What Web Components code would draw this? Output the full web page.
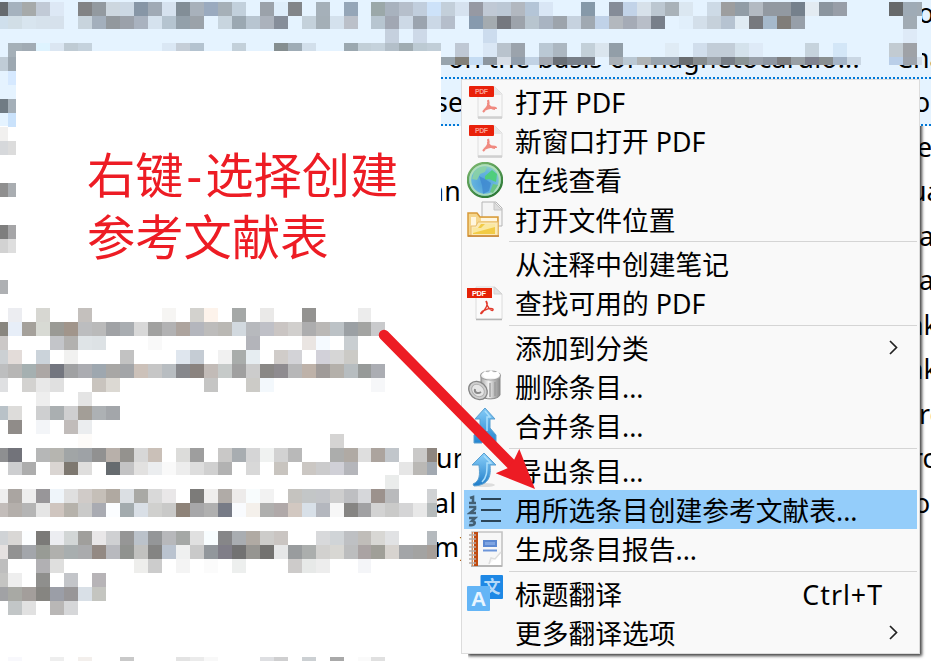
<!DOCTYPE html>
<html lang="zh-CN">
<head>
<meta charset="utf-8">
<title>Zotero</title>
<style>
  body {
    margin: 0;
    width: 931px;
    height: 663px;
    overflow: hidden;
    background: #fff;
    color: #000;
    font-family: "Noto Sans", "Noto Sans CJK SC", sans-serif;
    font-size: 26.75px;
  }
</style>
</head>
<body>
<app-window>
  <item-list slot="list">
    <item-row selected style="--author: 28px"><span slot="author">o</span></item-row>
    <item-row selected style="--title: 7px; --author: 6px">on the basis of magnetocardio...<span slot="author">Cha</span></item-row>
    <item-row selected focused style="--title: -6px; --author: 24px">se<span slot="author">oc</span></item-row>
    <item-row style="--author: 27px"><span slot="author">e</span></item-row>
    <item-row style="--title: -12px; --author: 20px">an<span slot="author">ua</span></item-row>
    <item-row style="--author: 29px"><span slot="author">a</span></item-row>
    <item-row style="--author: 29px"><span slot="author">a</span></item-row>
    <item-row style="--author: 17px"><span slot="author">nk</span></item-row>
    <item-row style="--author: 17px"><span slot="author">nk</span></item-row>
    <item-row style="--author: 29px"><span slot="author">re</span></item-row>
    <item-row style="--title: -5px; --author: 22px">ur<span slot="author">rc</span></item-row>
    <item-row style="--title: -7px; --author: 24px">al<span slot="author">o</span></item-row>
    <item-row style="--title: -7px">m)</item-row>
  </item-list>
  <pixel-mosaic slot="over" area="list"></pixel-mosaic>
  <note-card slot="over">右键<span style="margin: 0 3px">-</span>选择创建<br>参考文献表</note-card>
  <pixel-mosaic slot="over" area="note"></pixel-mosaic>
  <context-menu slot="over">
    <menu-item icon="pdf-soft">打开 PDF</menu-item>
    <menu-item icon="pdf-soft">新窗口打开 PDF</menu-item>
    <menu-item icon="globe">在线查看</menu-item>
    <menu-item icon="folder">打开文件位置</menu-item>
    <menu-line></menu-line>
    <menu-item>从注释中创建笔记</menu-item>
    <menu-item icon="pdf">查找可用的 PDF</menu-item>
    <menu-line></menu-line>
    <menu-item submenu>添加到分类</menu-item>
    <menu-item icon="trash">删除条目...</menu-item>
    <menu-item icon="merge">合并条目...</menu-item>
    <menu-line></menu-line>
    <menu-item icon="export">导出条目...</menu-item>
    <menu-item icon="list" active>用所选条目创建参考文献表...</menu-item>
    <menu-item icon="report">生成条目报告...</menu-item>
    <menu-line></menu-line>
    <menu-item icon="translate">标题翻译<span slot="key">Ctrl+T</span></menu-item>
    <menu-item submenu>更多翻译选项</menu-item>
  </context-menu>
  <red-arrow slot="over"></red-arrow>
</app-window>

<script>
const ICONS = {
  'pdf': `
    <path d="M9 2h19l7 7v25H9z" fill="#fbfbfb" stroke="#dcdcdc"/>
    <path d="M9 34.5h26" stroke="#b5b5b5" stroke-width="1.5"/>
    <path d="M27 2v7h8z" fill="#e2e2e2" stroke="#d2d2d2"/>
    <rect x="0" y="3" width="25" height="10" fill="#e52207"/>
    <text x="5" y="11" font-family="Liberation Sans" font-weight="bold" font-size="7.5" fill="#fff" textLength="14">PDF</text>
    <path d="M19 16c3 3 0 7-4 12-2 2-2-1 3-3 4-2 9-2 8 0s-6-2-7-9" fill="none" stroke="#e23a2c" stroke-width="1.4"/>`,
  'pdf-soft': `
    <path d="M11 3h17l7 7v24H11z" fill="#f8f8f8" stroke="#dedede"/>
    <path d="M11 33.5h24" stroke="#d0d0d0" stroke-width="2.5"/>
    <path d="M27 2v9h8z" fill="#e6e6e6"/>
    <rect x="2" y="2" width="25" height="11" rx="1" fill="#e9210a"/>
    <text x="8" y="10" font-family="Liberation Sans" font-weight="bold" font-size="7" fill="#f9a094" textLength="13">PDF</text>
    <path d="M21 16c2 5-1 8-5 12M17 26c5-3 12-3 12-1M21 19c0 3 4 6 7 6" fill="none" stroke="#f08a80" stroke-width="2.2"/>`,
  'globe': `
    <defs>
      <radialGradient id="sea" cx=".45" cy=".6" r=".6"><stop offset="0" stop-color="#4d9ed9"/><stop offset=".6" stop-color="#68b6df"/><stop offset="1" stop-color="#9cd6ba"/></radialGradient>
      <linearGradient id="rim" x2=".6" y2="1"><stop offset="0" stop-color="#7fba70"/><stop offset="1" stop-color="#2f7b37"/></linearGradient>
    </defs>
    <circle cx="18" cy="18" r="17" fill="url(#sea)" stroke="url(#rim)" stroke-width="2.4"/>
    <circle cx="18" cy="18" r="14.8" fill="none" stroke="#b9e3b4" stroke-width="2" opacity=".8"/>
    <path d="M7 10c4-5 9-6 13-5l-2 5-5 2-3 6-5-1z" fill="#8fd69c" opacity=".8"/>
    <path d="M18 14l7-6 5 4-1 8-7-3-4 1z" fill="#4fce7c"/>
    <path d="M12 14l6 3 6 4-2 8-6 3-1-9z" fill="#3d87cf" opacity=".75"/>
    <path d="M26 22l5 1-5 8-3-1z" fill="#6bc583"/>`,
  'folder': `
    <path d="M15 1h14l6 6v18H15z" fill="#f5f5f5" stroke="#b5b5b5"/>
    <path d="M27 1v8h8z" fill="#ddd" stroke="#c4c4c4"/>
    <path d="M1 12h9l3 4h18v19H1z" fill="#f5d68c" stroke="#d89a3a" stroke-width="1.5"/>
    <path d="M4 26V16h5v9zM14 17h16v3H14z" fill="#fff6df"/>
    <path d="M4 25h5l2-4h20v14H4z" fill="#fbe9b5" stroke="#e8bd6c"/>
    <path d="M6 27h5l3-4h14v10H6z" fill="#f2cb45"/>
    <path d="M6 27h8l4-4h10v3L6 32z" fill="#fae8a0"/>
    <path d="M1 35h31" stroke="#c9883b" stroke-width="1.6"/>`,
  'trash': `
    <defs><linearGradient id="can"><stop offset="0" stop-color="#aaa"/><stop offset=".4" stop-color="#f2f2f2"/><stop offset=".7" stop-color="#b8b8b8"/><stop offset="1" stop-color="#8a8a8a"/></linearGradient></defs>
    <path d="M14 6v21c3 4 17 4 19-1V6z" fill="url(#can)" stroke="#8a8a8a"/>
    <path d="M23 14v14M28 13v14" stroke="#999" stroke-width="1.3"/>
    <ellipse cx="23.5" cy="6.5" rx="10" ry="4.5" fill="#f2f2f2" stroke="#a0a0a0" stroke-width="1.2"/>
    <path d="M15 5l3-3 3 2 3-3 3 3 4-2 2 4-4 3H18z" fill="#fff"/>
    <ellipse cx="11" cy="21.5" rx="8.3" ry="10" transform="rotate(-48 11 21.5)" fill="#cfcfcf" stroke="#858585" stroke-width="1.3"/>
    <ellipse cx="11" cy="21.5" rx="5.5" ry="7" transform="rotate(-48 11 21.5)" fill="#e6e6e6" stroke="#b0b0b0"/>
    <path d="M8 20c-1 4 3 5 6 3" fill="none" stroke="#8a8a8a" stroke-width="2"/>`,
  'merge': `
    <defs><linearGradient id="up" x2="0" y2="1"><stop offset="0" stop-color="#85ccf8"/><stop offset="1" stop-color="#2384cf"/></linearGradient></defs>
    <path d="M18 0l10 11h-5v9l6 7v8h-8l-3-9-3 9H7v-8l6-7v-9H8z" fill="url(#up)" stroke="#5a9fd0"/>
    <path d="M18 3l5 6h-3v14" fill="none" stroke="#a9defb" stroke-width="1.5"/>`,
  'export': `
    <defs><linearGradient id="out" x2="0" y2="1"><stop offset="0" stop-color="#8bd0fa"/><stop offset="1" stop-color="#1f7dc9"/></linearGradient></defs>
    <ellipse cx="17" cy="33" rx="11" ry="2" fill="#ddd"/>
    <path d="M17 1L29 13h-6c1 10 0 20-16 21l-1-2c7-3 7-9 6-19H5z" fill="url(#out)" stroke="#5a9fd0"/>
    <path d="M17 4l7 7h-4c0 9 0 14-5 19" fill="none" stroke="#a9defb" stroke-width="1.5"/>`,
  'list': `
    <g stroke="#2b4456" stroke-width="2.2"><path d="M14 7h20M14 18h20M14 29h20"/></g>
    <g fill="none" stroke="#435f73" stroke-width="2.6"><path d="M3 6l3-1v6M2 11h7M2 15h6v2l-5 4h6M2 26h6l-3 3c4 0 4 5-3 4"/></g>`,
  'report': `
    <path d="M5 1h30v34H5z" fill="#f7f7f7" stroke="#c4c4c4" stroke-width="1.6"/>
    <path d="M4 35h31" stroke="#b5b5b5" stroke-width="2"/>
    <path d="M7 1h4v34H7z" fill="#c04a10"/>
    <path d="M5.5 1v34" stroke="#db8a52"/>
    <path d="M2 4h7M2 8h7M2 12h7M2 16h7M2 20h7M2 24h7M2 28h7M2 32h7" stroke="#b5aaa5" stroke-width="1.5"/>
    <path d="M16 9h14v7H16z" fill="#5c89d2"/><path d="M18 11h10v3H18z" fill="#7fa5e2"/>
    <path d="M16 19.5h14" stroke="#6d96da" stroke-width="2"/>
    <path d="M22 34l12-13v13z" fill="#fff"/><path d="M22 33l2-6 4 1 6-7" fill="none" stroke="#dedede" stroke-width="1.5"/>`,
  'translate': `
    <rect x="13.5" y="0" width="22.5" height="24" rx="1" fill="#1e88e5"/>
    <text x="16.500" y="18" font-family="Noto Sans CJK SC" font-weight="bold" font-size="17" fill="#b5d9f8">文</text>
    <rect x="0" y="11" width="23" height="25" rx="1" fill="#64b5f6"/>
    <text x="4" y="31" font-family="Liberation Sans" font-weight="bold" font-size="21" fill="#e9f5ff">A</text>`
};

// One line per mosaic row: height | colours from the left edge, ".n" skips n cells
const MOSAICS = {
  list: `
2|
14|666a6e a5b2be a6aaaa c1cad6 dde8f5 .1 828385 939aa0 cdd7df ccd8e4 8796a6 a0aab5 d6e2ef 828e97 a8b1bb 9aaabf a6b0b8 c2d0dc .1 9ba2aa deedfa 828589 .1 a5b0b9 .1 95a6b8 .1 9ba8a9 a8b2be b6bfcb c1cedd cde2f9 c3cfda d6e2ef 9699a3 c0c9d5 bcc8d5 b2b8c0 b4c5d7 d9e6f5 .2 8699a9 .1 858c98 c2d3e8 d7e1ea bcc7d1 a9b2b9 dbe7f1 .1 cddae6 9d9e9f 929da6 b3bac2 9299a1 9299a1 75808c e3ebf2 8b959f 989ea8 .3 67696b 9fabb6 a1abb4
13|cfdfec d1dee6 d8e5ef d6e2ec d6e1ec .1 c8d4dd a3afbc 92989d 9ba1aa a9b2bf d5e2ee b5c4d0 93a0aa 9ba2a9 .1 c8d5df 9ba8b2 b8c5d1 abb2bc 868e9a .1 c4d1db a4afb7 d4e1ed bbc0c9 .1 b7c5d0 a1a7b3 cdd9e6 9ba4af cbd8e6 b5becb .1 879aae a4abb0 75787f 9da3ab b8c5cf a9b4c2 9da4ac c6d2df a0a9b2 c0d2e8 b3b8be a5abb6 b8bec8 787f8a .1 e1effb d3dfea c6d1db b6c3d1 e0ebf3 77797e a6b9cb 807d79 979fa9 .7 a1abb4
14|.28 c5d0de .1 cdd9e8 .4 ccdcee .29 deeaf7
14|.1 a5b0b8 a1abb4 def3ff dbe6f2 bfcbd4 c5d2dd .5 dae7f4 c5ced8 b4c3d0 .2 c3d0da .2 858e90 9facb6 d2dfeb .2 9ba8b0 c2cfd8 c5d2dc b3bfc9 a0acb2 bccad3 c1ced8 .1 bfc8d4 .1 dae7f5 b9c3cd 9ba3ac .1 bac8d4 acb7c1 .1 c3d0d9 dae5ee 929ea8 .3 dfebf5 .1 d1deec c2cdd8 c2cdd8 d4e2ec deeaf7 .3 c6d3dd .1 d3e6f7 .3 c2cbd2 9fa2a7
8|c0ccd6 9da8b1 .30 98a4ad 828079 c5dcf3 8d969f d7dee7 919eac c1d2e4 a2a7b0 6a6f76 787f89 787f89 e5f3ff a9b0b7 bac8d4 afb3b5 99a4ae 9aa5b1 696d71 868b8e 9ba3ab 767d86 8a9496 98a0aa 8f97a2 7c7d80 99a0a5 80838f 898f91 a4b4c7 cad7e4 .2 b9cee8 9da3ac d3deea
6|c0ccd6 9da8b1
14|.1 d6e9ff
14|
14|707b84 a4afb8
14|.1 cae2fb
14|f1f0ef
14|d6d8db dcdcdc
14|
14|
14|8f8f8f a9adb1
14|
14|
14|7e7e7e a5a5a7
14|d2d2d2 dedede
14|
13|
14|aeb0b3`,
  note: `
308|
14|.1 ecedf1 .1 d7d7d2 .2 c4c0bd .5 f6f5f3 .1 d3d2ce fdf3eb .1 a5a8a7 .1 eae9e8 .2 949391 .3 ececec
14|89867f e7eef8 a5a19b d8dad4 9a9a95 a1958b bcbdbf bababa a0a2a5 a9adb1 d8d8d8 a1a1a0 b2b2b3 ada49e b4b6bd bdbcbb bab8b4 d2d9df b7b9bd bfc0c7 cac5c3 d1cfcd adadae bab8b6 bcc2c6 9ba0a4 a3a4a2 c9cacc
14|cbc8c7 .3 c3c5c9 b2b1af dfe4e7 dde2e5 .3 f9f9f9 .6 b3b4ba .3 eae5e2 f5faff .1 c9ced1
14|ccd0d3 e3dcd9 .1 cbd3da .1 f1f1f0 .3 c2c2c2 .3 dfe6ee c5ccd4 .1 f1f1f1 a9adab e6edf1 .1 d0ccc9 d3d3d7 .1 d2d1d9 d6d6d6 cbcac6
14|bdbebf b7b6b5 a5b0b1 aca7a5 73767f a0a1a3 abacb1 9ea7af a8a7a5 a3a5a8 ccc1b9 c6c6c6 b8bdc1 87888c 8a837f c2bbb7 c6cac9 a0a0a0 cccccc 8a8886 8f8c90 b7b7b8 beb2a9 a09b99 b4b0aa b7bdc0 979a99 abadb3
14|dfe0e2 .1 d3d2d0 e8e8e8 e0e0e0 .2 c9c4be dcd9d3 .6 c5c5c4 .2 cccbc7 f3f8fc .7 f6f7f9
14|.3 eeeeee .2 e4e4e4
14|b9c2c8 dddcda .1 cecfd0 aaafb1 cfcfd0 a39e97 adb1b4 a3a6aa
14|.1 908c89 .1 f3f5f8 .1 c1bcba ebedef
14|.6 fdfbf9 .17 d5d4d3
14|8e8f91 72737a .1 b6b7b7 b6b5b0 a1a5a6 9ea2a6 919191 b8b0aa 94928e d7d7d7 cac0b8 .1 dcdcda 9e9e9e .1 c9c8c7 a8adb1 d5d5d6 f0f2f1 d2d2d2 b9b9b9 .2 acadac b0aaa4 dedede aca49e c1c6cb .1 cac9c8 8e8680
13|.1 cdced0 adadad .1 dad5d2 7e7870 dfdedd .1 666b6f c3c3c4 e2e1e0 ebedef f9f9f9 ededed dddddd d0d0d0 b2b2b2 .1 d8d8d8 .1 c8c4bf .1 cbc7c3 cbcbcc d0d0d7 b5b6bb .3 e6e6e6 bab8b5 a2a9b1
14|.28 eaeceb
14|efefef aaa5a1 eeeeee 989699 eff5fa dfdfdf d0cbc8 c5bfb8 b0a9a1 dbdfe3 a9a9a5 d9d9d9 e9e7e8 .1 7c7b79 efeeed b0aba7 edebea f8fcfd f2f2f2 .1 c5c3bf c3c6c7 c3c5c9 cecece bebfc2 d6d7da 9c928d b9babc .2 d0d2d4
14|c3bdba b4afab b5b5b5 e5e5e5 cfc5bf b6b2ab cacac9 a9abb2 fbfdff a3abae d9dfe6 d0d0ce c9c9c8 8e8379 a7a7a9 b0b0b0 777b86 f9fbfe f4f0eb afafae b0a9a9 d2c8c1 d8e0e8 b4b7be f7f7f7 868583 a1a1a3 d3d3d3 cacac9 d5d5d6 e8e8e8 b6bbbc
14|
14|d0d3d6 d9d7d5 fcfeff 7b7a78 ecedf1 d2d6d6 a09f9c e9e7e8 cfd0d2 969696 bbc2ca 949698 b7b8bb a5a8a6 e0e0e0 f8fdff 868688 a9adb1 b0aaa3 cdccca cac5c2 .2 d8d9db d0d4d7 bec0c3 c0bdb9 d8d7d4 e1e2e4 .2 b5babe
14|e5e1e0 929292 a3a6ab 989b95 b0b0ad a8aeaf aaabad 938983 b8b9be 90928f c1c1bf 848483 bac3cf eff0f0 c9c9c9 92979c 807e88 727272 969591 737270 e6e7e8 999c9e abaead d2d1cf d8d7d3 bcbdbe aaa3a3 a09f98 d7d3cf a3a5a8 a3a3a2 a79f99
14|bebebe .2 b1b0b3 dfdfde .5 eeeeec cccccc .1 f4f4f4 .1 fbfbfb .1 edefee .3 cdcbca e7e9e8 ededed .2 f4f5f8
14|c4c4c2 eeeeee .1 8f8f8d .1 c3c5c9 .1 b7b4b7
14|a1a2a5 a8a9a4 a39e9b 868581 9b9ea7 989698 d9e0e7 c4c5c0
14|.1 c2c6c7 e1e1e1 .1 b9b7b6 d6d7d9
42|
4|.1 f8f8fc .2 eeeeee .1 f3efec .2 c9c9c9 .3 e3e3e3 ebebeb f8f8f8 .3 dedfe2 cfcfd0 .1 ccd0d3 .1 a9a9a9 .1 fafafa e0e0e0`
};

class AppWindow extends HTMLElement {
  constructor() {
    super();
    this.attachShadow({mode: 'open'}).innerHTML = `
      <style>
        :host { display: block; position: relative; width: 931px; height: 663px; overflow: hidden; }
      </style>
      <slot name="list"></slot>
      <slot name="over"></slot>
    `;
  }
}

class ItemList extends HTMLElement {
  constructor() {
    super();
    this.attachShadow({mode: 'open'}).innerHTML = `
      <style>
        :host { display: flex; flex-direction: column; margin-top: -8px; }
      </style>
      <slot></slot>
    `;
  }
}

class ItemRow extends HTMLElement {
  constructor() {
    super();
    this.attachShadow({mode: 'open'}).innerHTML = `
      <style>
        :host {
          display: flex;
          position: relative;
          box-sizing: border-box;
          height: 44.5px;
          padding-left: 441px;
          line-height: 42px;
          white-space: nowrap;
        }
        :host([selected]) { background: #e5f3ff; }
        :host([focused])::before {
          content: "";
          position: absolute;
          inset: -4px 0 0 441px;
          --dots: repeating-linear-gradient(90deg, #0078d7 0 2px, transparent 2px 4px);
          background: var(--dots) top / 100% 2px no-repeat, var(--dots) bottom / 100% 2px no-repeat;
        }
        .title { flex: 0 0 449px; text-indent: var(--title, 0); letter-spacing: .23px; }
        .author { text-indent: var(--author, 0); }
      </style>
      <div class="title"><slot></slot></div>
      <div class="author"><slot name="author"></slot></div>
    `;
  }
}

class PixelMosaic extends HTMLElement {
  connectedCallback() {
    const rows = MOSAICS[this.getAttribute('area')].trim().split('\n').map(line => {
      const [height, cells] = line.split('|');
      const html = cells.split(' ').filter(Boolean).map(c =>
        c[0] === '.' ? '<i></i>'.repeat(+c.slice(1)) : `<i style="background:#${c}"></i>`).join('');
      return `<div style="height:${height}px">${html}</div>`;
    }).join('');
    this.attachShadow({mode: 'open'}).innerHTML = `
      <style>
        :host { display: block; position: absolute; inset: 0; }
        div { display: flex; }
        i { flex: 0 0 14px; }
        i:first-child { flex-basis: 8px; }
        i:nth-child(27) { flex-basis: 13px; }
        i:nth-child(67) { flex-basis: 5px; }
        /* the bands over the selected rows hide the text below them */
        :host([area="list"]) div:nth-of-type(-n+6) { width: 922px; background: #e5f3ff; }
        :host([area="list"]) div:nth-of-type(7) { width: 16px; }
        :host([area="note"]) i:nth-child(32) { flex-basis: 10px; }
      </style>
      ${rows}
    `;
  }
}

class NoteCard extends HTMLElement {
  constructor() {
    super();
    this.attachShadow({mode: 'open'}).innerHTML = `
      <style>
        :host {
          display: block;
          position: absolute;
          left: 16px;
          top: 51px;
          width: 425px;
          height: 257px;
          box-sizing: border-box;
          padding: 92px 0 0 71px;
          background: #fff;
          color: #ed1c24;
          font-size: 48.3px;
          line-height: 62px;
          white-space: nowrap;
        }
      </style>
      <slot></slot>
    `;
  }
}

class ContextMenu extends HTMLElement {
  constructor() {
    super();
    this.attachShadow({mode: 'open'}).innerHTML = `
      <style>
        :host {
          display: flex;
          flex-direction: column;
          position: absolute;
          left: 461px;
          top: 79px;
          width: 459px;
          height: 575px;
          box-sizing: border-box;
          padding: 2px 2px 0 2px;
          border: 1px solid #dcdcdc;
          background: #f9f9f9;
        }
        /* shadow falls to the right and below, starting a little past the corner */
        :host::after {
          content: "";
          position: absolute;
          inset: 6px -1px -1px 6px;
          z-index: -1;
          box-shadow: 1px 1px 3px 1px rgba(0, 0, 0, .75);
          clip-path: polygon(100% 0, 120% 0, 120% 120%, 0 120%, 0 100%, 100% 100%);
        }
      </style>
      <slot></slot>
    `;
  }
}

class MenuItem extends HTMLElement {
  connectedCallback() {
    const icon = ICONS[this.getAttribute('icon')] || '';
    const arrow = this.hasAttribute('submenu')
      ? '<svg class="arrow" width="9" height="15" viewBox="0 0 9 15"><path d="M1 1l6.500 6.500L1 14" fill="none" stroke="#222" stroke-width="1.700"/></svg>' : '';
    this.attachShadow({mode: 'open'}).innerHTML = `
      <style>
        :host {
          display: flex;
          align-items: center;
          height: 39.2px;
          padding: 0 19px 0 3px;
          line-height: 37px;
          white-space: nowrap;
        }
        :host([active]) { background: #94cdfa; }
        .icon { width: 36px; height: 36px; margin-right: 12px; }
        .label, .key { padding-top: 2px; }
        .label { flex: 1; }
        .key { margin-right: 15px; letter-spacing: 1px; }
      </style>
      <svg class="icon" viewBox="0 0 36 36">${icon}</svg>
      <div class="label"><slot></slot></div>
      <div class="key"><slot name="key"></slot></div>
      ${arrow}
    `;
  }
}

class MenuLine extends HTMLElement {
  constructor() {
    super();
    this.attachShadow({mode: 'open'}).innerHTML = `
      <style>
        :host { display: flex; align-items: center; height: 5.4px; padding-left: 45px; }
        div { flex: 1; height: 1px; background: #d5d5d5; }
      </style>
      <div></div>
    `;
  }
}

class RedArrow extends HTMLElement {
  constructor() {
    super();
    this.attachShadow({mode: 'open'}).innerHTML = `
      <style>
        :host { display: block; position: absolute; left: 370px; top: 320px; }
        svg { display: block; }
      </style>
      <svg width="180" height="180" viewBox="370 320 180 180">
        <path d="M384 335L512 465" stroke="#ed1c24" stroke-width="10.5" stroke-linecap="round"/>
        <path d="M535 489l-39.300-15.700L508 468l6-8 5.300-11z" fill="#ed1c24"/>
      </svg>
    `;
  }
}

customElements.define('app-window', AppWindow);
customElements.define('item-list', ItemList);
customElements.define('item-row', ItemRow);
customElements.define('pixel-mosaic', PixelMosaic);
customElements.define('note-card', NoteCard);
customElements.define('context-menu', ContextMenu);
customElements.define('menu-item', MenuItem);
customElements.define('menu-line', MenuLine);
customElements.define('red-arrow', RedArrow);
</script>
</body>
</html>
